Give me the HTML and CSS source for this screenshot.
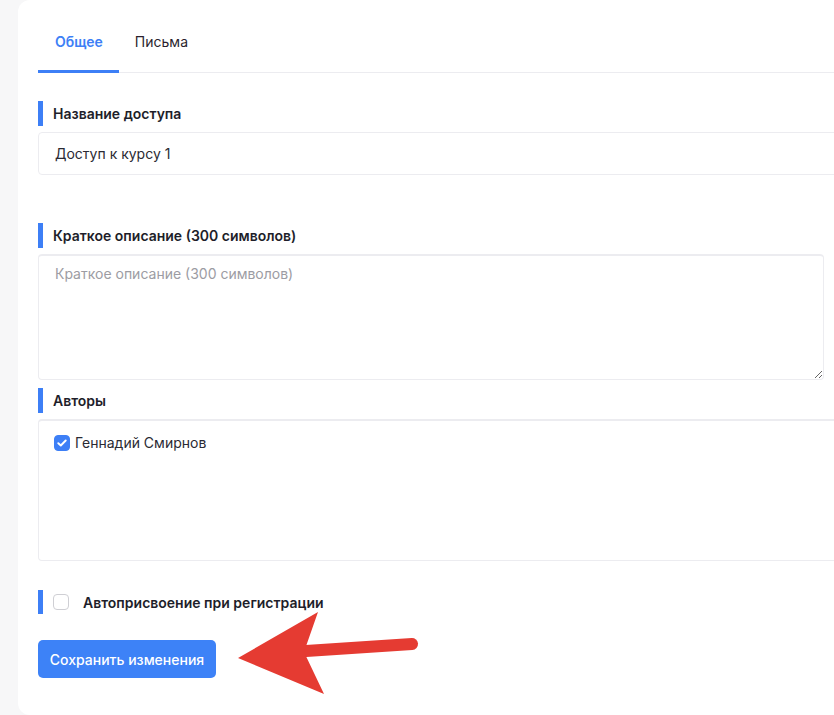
FILE: index.html
```html
<!DOCTYPE html>
<html lang="ru">
<head>
<meta charset="utf-8">
<title>Доступ</title>
<link rel="stylesheet" href="styles.css">
</head>
<body>
<div class="card">
  <div class="tabs">
    <div class="tab active">Общее</div>
    <div class="tab">Письма</div>
  </div>

  <div class="label first">Название доступа</div>
  <input class="input" type="text" value="Доступ к курсу 1">

  <div class="label second">Краткое описание (300 символов)</div>
  <textarea class="textarea" placeholder="Краткое описание (300 символов)"></textarea>

  <div class="label third">Авторы</div>
  <div class="authors">
    <label class="author">
      <span class="check checked">
        <svg width="10" height="8" viewBox="0 0 10 8"><path d="M1.3 4.2 L3.8 6.5 L8.7 1.5" fill="none" stroke="#fff" stroke-width="1.9" stroke-linecap="round" stroke-linejoin="round"/></svg>
      </span>
      <span>Геннадий Смирнов</span>
    </label>
  </div>

  <div class="label auto">
    <span class="check"></span>
    <span class="auto-text">Автоприсвоение при регистрации</span>
  </div>

  <button class="save">Сохранить изменения</button>
</div>

<svg class="arrow" width="200" height="100" viewBox="0 0 200 100">
  <line x1="76" y1="46" x2="182" y2="39" stroke="#e53b32" stroke-width="12" stroke-linecap="round"/>
  <polygon points="8,53 88,7 74,47 94,89" fill="#e53b32"/>
</svg>
</body>
</html>
```

FILE: styles.css
```css
html, body {
  margin: 0;
  padding: 0;
}
body {
  background: #f7f7f8;
  font-family: Inter, "Noto Sans", sans-serif;
  font-size: 14px;
  color: #2a2a33;
  overflow: hidden;
  height: 715px;
  position: relative;
}
.card {
  margin-left: 18px;
  width: 816px;
  height: 715px;
  background: #ffffff;
  border-radius: 12px 0 0 12px;
  padding-left: 20px;
  box-sizing: border-box;
  overflow: hidden;
}
.tabs {
  display: flex;
  padding-top: 20px;
  border-bottom: 1px solid #ececf0;
}
.tab {
  padding: 12px 16px 18px;
  line-height: 20px;
  font-size: 14px;
  color: #2b1f2e;
  border-bottom: 3px solid transparent;
  margin-bottom: -1px;
}
.tab.active {
  color: #3d7ff6;
  font-weight: 600;
  padding-left: 17px;
  padding-right: 16px;
  border-bottom-color: #3d7ff6;
}
.label {
  display: flex;
  align-items: center;
  height: 25px;
  border-left: 5px solid #3d7ff6;
  padding-left: 10px;
  font-weight: 600;
  font-size: 14px;
  color: #1e1e2a;
}
.label.first { margin-top: 28px; }
.label.second { margin-top: 48px; }
.label.third { margin-top: 8px; }
.label.auto { margin-top: 29px; height: 24px; }
.input {
  display: block;
  box-sizing: border-box;
  margin-top: 6px;
  width: 830px;
  height: 43px;
  border: 1px solid #ececf0;
  border-radius: 4px;
  padding: 0 16px;
  font-family: Inter, "Noto Sans", sans-serif;
  font-size: 14px;
  color: #2a2a33;
  outline: none;
}
.textarea {
  display: block;
  box-sizing: border-box;
  margin-top: 6px;
  width: 786px;
  height: 126px;
  border: 1px solid #ececf0;
  border-top: 2px solid #ececf0;
  border-radius: 4px;
  padding: 8px 16px;
  line-height: 20px;
  font-family: Inter, "Noto Sans", sans-serif;
  font-size: 14px;
  color: #2a2a33;
  outline: none;
  resize: vertical;
}
.textarea::placeholder {
  color: #9c9ca3;
}
.authors {
  margin-top: 6px;
  width: 830px;
  height: 142px;
  box-sizing: border-box;
  border: 1px solid #ececf0;
  border-top: 2px solid #ececf0;
  border-radius: 4px;
  padding: 12px 15px;
  background: #ffffff;
}
.author {
  display: flex;
  align-items: center;
  gap: 5px;
  line-height: 20px;
  color: #2a2a33;
}
.check {
  width: 16px;
  height: 16px;
  box-sizing: border-box;
  border: 1px solid #cfcfd4;
  border-radius: 4px;
  background: #fff;
  display: inline-flex;
  align-items: center;
  justify-content: center;
  flex: none;
}
.check.checked {
  background: #3d7ff6;
  border-color: #3d7ff6;
}
.auto-text {
  margin-left: 14px;
}
.save {
  display: block;
  margin-top: 26px;
  width: 178px;
  height: 38px;
  border: none;
  border-radius: 5px;
  background: #3d82f7;
  color: #ffffff;
  font-family: Inter, "Noto Sans", sans-serif;
  font-size: 14px;
  font-weight: 500;
  padding: 0;
}
.arrow {
  position: absolute;
  left: 230px;
  top: 605px;
}
```
